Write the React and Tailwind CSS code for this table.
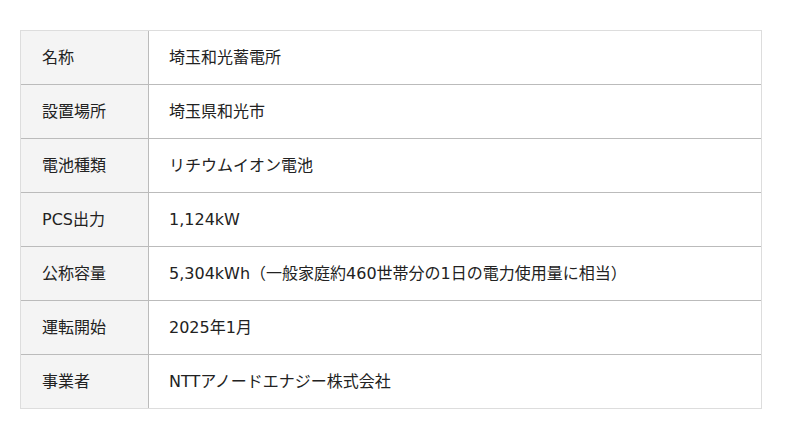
export default function App() {
  const rows = [
    ["名称", "埼玉和光蓄電所"],
    ["設置場所", "埼玉県和光市"],
    ["電池種類", "リチウムイオン電池"],
    ["PCS出力", "1,124kW"],
    ["公称容量", "5,304kWh（一般家庭約460世帯分の1日の電力使用量に相当）"],
    ["運転開始", "2025年1月"],
    ["事業者", "NTTアノードエナジー株式会社"],
  ];
  return (
    <div
      className="w-[800px] h-[439px] bg-white pt-[30px] pl-[20px]"
      style={{ fontFamily: '"DejaVu Sans", "Noto Sans CJK JP", sans-serif' }}
    >
      <div className="w-[742px] border border-[#dddddd] text-[16px] text-[#222222]">
        {rows.map(([k, v], i) => (
          <div
            key={k}
            className={i > 0 ? "flex h-[54px] border-t border-[#bbbbbb]" : "flex h-[53px]"}
          >
            <div className="w-[128px] shrink-0 bg-[#f4f4f4] border-r border-[#bbbbbb] flex items-center pl-[21px]">
              {k}
            </div>
            <div className="flex-1 flex items-center pl-[20px]">{v}</div>
          </div>
        ))}
      </div>
    </div>
  );
}
